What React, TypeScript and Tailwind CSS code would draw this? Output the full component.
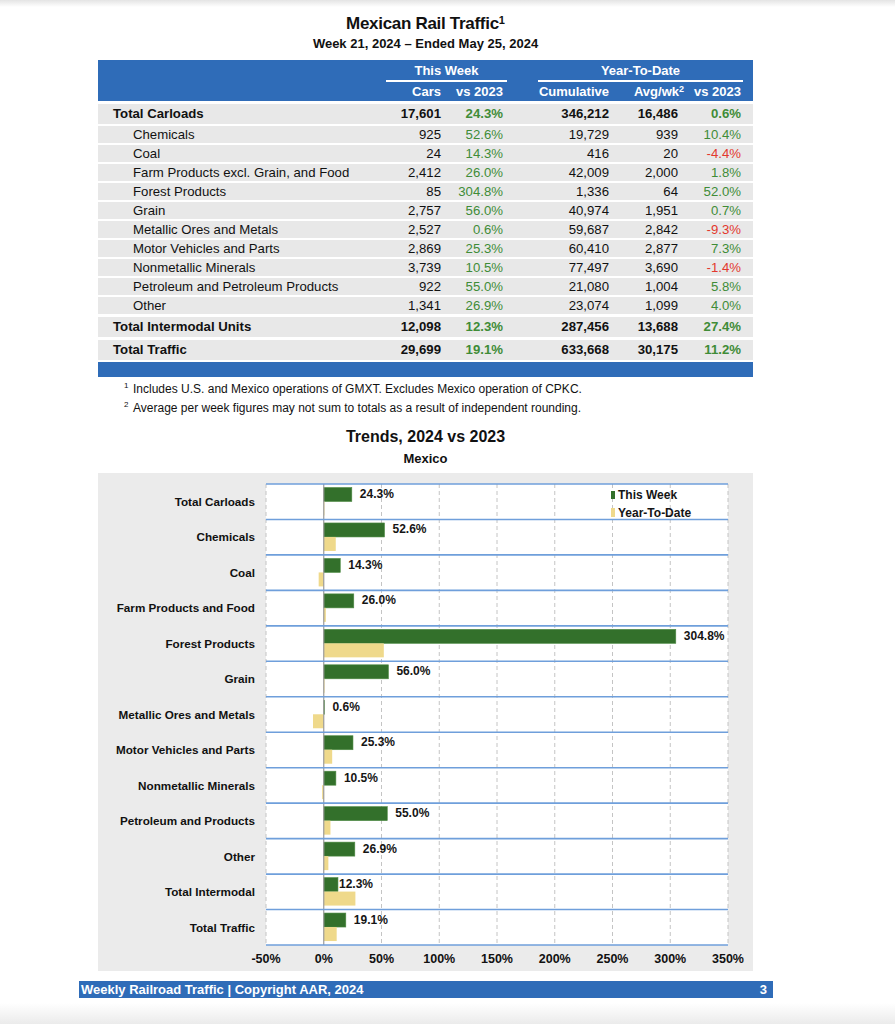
import React from "react";

type Row = { name: string; cars: string; wk: string; cum: string; avg: string; ytd: string; kind: "total" | "sub" };

const tableRows: Row[] = [
  { name: "Total Carloads", cars: "17,601", wk: "24.3%", cum: "346,212", avg: "16,486", ytd: "0.6%", kind: "total" },
  { name: "Chemicals", cars: "925", wk: "52.6%", cum: "19,729", avg: "939", ytd: "10.4%", kind: "sub" },
  { name: "Coal", cars: "24", wk: "14.3%", cum: "416", avg: "20", ytd: "-4.4%", kind: "sub" },
  { name: "Farm Products excl. Grain, and Food", cars: "2,412", wk: "26.0%", cum: "42,009", avg: "2,000", ytd: "1.8%", kind: "sub" },
  { name: "Forest Products", cars: "85", wk: "304.8%", cum: "1,336", avg: "64", ytd: "52.0%", kind: "sub" },
  { name: "Grain", cars: "2,757", wk: "56.0%", cum: "40,974", avg: "1,951", ytd: "0.7%", kind: "sub" },
  { name: "Metallic Ores and Metals", cars: "2,527", wk: "0.6%", cum: "59,687", avg: "2,842", ytd: "-9.3%", kind: "sub" },
  { name: "Motor Vehicles and Parts", cars: "2,869", wk: "25.3%", cum: "60,410", avg: "2,877", ytd: "7.3%", kind: "sub" },
  { name: "Nonmetallic Minerals", cars: "3,739", wk: "10.5%", cum: "77,497", avg: "3,690", ytd: "-1.4%", kind: "sub" },
  { name: "Petroleum and Petroleum Products", cars: "922", wk: "55.0%", cum: "21,080", avg: "1,004", ytd: "5.8%", kind: "sub" },
  { name: "Other", cars: "1,341", wk: "26.9%", cum: "23,074", avg: "1,099", ytd: "4.0%", kind: "sub" },
];

const totalRows: Row[] = [
  { name: "Total Intermodal Units", cars: "12,098", wk: "12.3%", cum: "287,456", avg: "13,688", ytd: "27.4%", kind: "total" },
  { name: "Total Traffic", cars: "29,699", wk: "19.1%", cum: "633,668", avg: "30,175", ytd: "11.2%", kind: "total" },
];

// chart: this week vs ytd, % change
const trends: { name: string; tw: number; ytd: number; gap?: number }[] = [
  { name: "Total Carloads", tw: 24.3, ytd: 0.6 },
  { name: "Chemicals", tw: 52.6, ytd: 10.4 },
  { name: "Coal", tw: 14.3, ytd: -4.4 },
  { name: "Farm Products and Food", tw: 26.0, ytd: 1.8 },
  { name: "Forest Products", tw: 304.8, ytd: 52.0 },
  { name: "Grain", tw: 56.0, ytd: 0.7 },
  { name: "Metallic Ores and Metals", tw: 0.6, ytd: -9.3 },
  { name: "Motor Vehicles and Parts", tw: 25.3, ytd: 7.3 },
  { name: "Nonmetallic Minerals", tw: 10.5, ytd: -1.4 },
  { name: "Petroleum and Products", tw: 55.0, ytd: 5.8 },
  { name: "Other", tw: 26.9, ytd: 4.0 },
  { name: "Total Intermodal", tw: 12.3, ytd: 27.4, gap: 1 },
  { name: "Total Traffic", tw: 19.1, ytd: 11.2 },
];

function Pct({ v }: { v: string }) {
  const neg = v.startsWith("-");
  return <div className={neg ? "text-right text-[#e3392e]" : "text-right text-[#3f8c37]"}>{v}</div>;
}

function TableRow({ r }: { r: Row }) {
  const total = r.kind === "total";
  return (
    <div
      className={
        total
          ? "grid grid-cols-[283px_60px_62px_106px_69px_63px] pr-[12px] bg-[#e8e8e8] h-[20px] leading-[20px] font-bold mt-[3px]"
          : "grid grid-cols-[283px_60px_62px_106px_69px_63px] pr-[12px] bg-[#e8e8e8] h-[17px] leading-[17px] mt-[2px]"
      }
    >
      <div className={total ? "pl-[15px] whitespace-nowrap" : "pl-[35px] whitespace-nowrap"}>{r.name}</div>
      <div className="text-right">{r.cars}</div>
      <Pct v={r.wk} />
      <div className="text-right">{r.cum}</div>
      <div className="text-right">{r.avg}</div>
      <Pct v={r.ytd} />
    </div>
  );
}

function TrendChart() {
  const W = 462;
  const H = 461;
  const rowH = H / 13;
  const step = W / 8;
  const x0 = step;
  const px = (v: number) => (v / 50) * step;
  const ticks = ["-50%", "0%", "50%", "100%", "150%", "200%", "250%", "300%", "350%"];

  return (
    <div className="bg-[#ebebeb] h-[498px] pt-[11px] pr-[25px] flex gap-[11px]">
      <div className="w-[157px] h-[461px] flex flex-col text-[11.7px] font-bold">
        {trends.map((t) => (
          <div key={t.name} className="flex-1 flex items-center justify-end whitespace-nowrap">
            {t.name}
          </div>
        ))}
      </div>
      <div className="w-[462px] flex flex-col">
        <svg width={W} height={H} className="bg-white overflow-visible block">
          {ticks.map((_, i) =>
            i === 1 ? null : (
              <line key={i} x1={i * step} y1={0} x2={i * step} y2={H} stroke="#c4c4c4" strokeWidth={1} strokeDasharray="4 3" />
            )
          )}
          {trends.map((t, i) => {
            const top = i * rowH;
            const gw = px(t.tw);
            const yw = px(t.ytd);
            return (
              <g key={t.name}>
                <rect x={x0} y={top + 3.5} width={gw} height={14} fill="#33702b" stroke="#4f8b45" strokeWidth={0.6} />
                <rect
                  x={yw < 0 ? x0 + yw : x0}
                  y={top + 17.5}
                  width={Math.abs(yw)}
                  height={14}
                  fill="#efd98b"
                />
                <text
                  x={x0 + Math.max(gw, 0) + (t.gap ?? 8)}
                  y={top + 10}
                  dominantBaseline="central"
                  fontSize={12}
                  fontWeight={700}
                  fill="#151515"
                >
                  {t.tw.toFixed(1)}%
                </text>
              </g>
            );
          })}
          <line x1={x0} y1={0} x2={x0} y2={H} stroke="#9a9a9a" strokeWidth={1.2} />
          {Array.from({ length: 14 }).map((_, i) => (
            <line key={i} x1={0} y1={i * rowH} x2={W} y2={i * rowH} stroke="#6f9fdb" strokeWidth={1.6} />
          ))}
          {/* legend */}
          <rect x={345} y={7} width={4} height={8} fill="#33702b" />
          <text x={352} y={11} dominantBaseline="central" fontSize={12} fontWeight={700} fill="#151515">
            This Week
          </text>
          <rect x={345} y={24} width={4} height={9} fill="#efd98b" />
          <text x={352} y={28.5} dominantBaseline="central" fontSize={12} fontWeight={700} fill="#151515">
            Year-To-Date
          </text>
        </svg>
        <div className="relative h-[14px] mt-[7px] text-[12.5px] font-bold leading-[14px]">
          {ticks.map((t, i) => (
            <span key={t} className="absolute -translate-x-1/2 whitespace-nowrap" style={{ left: i * step }}>
              {t}
            </span>
          ))}
        </div>
      </div>
    </div>
  );
}

export default function App() {
  return (
    <div className="w-[895px] h-[1024px] overflow-hidden bg-[linear-gradient(to_bottom,#e4e4e4_0px,#ffffff_7px,#ffffff_1003px,#ebebeb_1024px)] font-['Liberation_Sans',Arial,sans-serif] text-[#111]">
      <div className="ml-[79px] w-[694px] pt-[13px]">
        {/* TITLE */}
        <div className="ml-[19px] w-[655px] text-center">
          <div className="h-[22px] leading-[22px] text-[17px] font-bold tracking-[-0.3px]">
            Mexican Rail Traffic<sup className="text-[11px] tracking-normal">1</sup>
          </div>
          <div className="mt-[1px] h-[16px] leading-[16px] text-[13px] font-bold">
            Week 21, 2024 – Ended May 25, 2024
          </div>
        </div>

        {/* TABLE */}
        <div className="ml-[19px] w-[655px] mt-[8px] text-[13.2px]">
          <div className="bg-[#2f6cb8] h-[41px] pt-[3px] text-white font-bold text-[13px]">
            <div className="flex leading-[16px]">
              <div className="w-[288px]" />
              <div className="w-[121px] text-center pb-[1px] border-b-2 border-white">This Week</div>
              <div className="w-[31px]" />
              <div className="w-[205px] text-center pb-[1px] border-b-2 border-white">Year-To-Date</div>
            </div>
            <div className="grid grid-cols-[283px_60px_62px_106px_69px_63px] pr-[12px] mt-[2px] leading-[16px]">
              <div />
              <div className="text-right">Cars</div>
              <div className="text-right">vs 2023</div>
              <div className="text-right">Cumulative</div>
              <div className="text-right -mr-[6px] whitespace-nowrap">
                Avg/wk<sup className="text-[9px]">2</sup>
              </div>
              <div className="text-right">vs 2023</div>
            </div>
          </div>
          {tableRows.map((r) => (
            <TableRow key={r.name} r={r} />
          ))}
          {totalRows.map((r) => (
            <TableRow key={r.name} r={r} />
          ))}
          <div className="bg-[#2f6cb8] h-[15px] mt-[2px]" />
        </div>

        {/* FOOTNOTES */}
        <div className="mt-[3px] pl-[45px] text-[12px] leading-[19px]">
          <div className="flex">
            <span className="w-[9px] text-[8px] leading-[12px]">1</span>
            <span>Includes U.S. and Mexico operations of GMXT. Excludes Mexico operation of CPKC.</span>
          </div>
          <div className="flex">
            <span className="w-[9px] text-[8px] leading-[12px]">2</span>
            <span>Average per week figures may not sum to totals as a result of independent rounding.</span>
          </div>
        </div>

        {/* CHART */}
        <div className="ml-[19px] w-[655px]">
          <div className="mt-[9px] h-[20px] leading-[20px] text-center text-[16px] font-bold">Trends, 2024 vs 2023</div>
          <div className="mt-[4px] h-[16px] leading-[16px] text-center text-[13px] font-bold">Mexico</div>
          <div className="mt-[6px]">
            <TrendChart />
          </div>
        </div>

        {/* FOOTER */}
        <div className="mt-[10px] h-[17px] bg-[#2f6cb8] text-white text-[13px] font-bold leading-[17px] flex justify-between pl-[2px] pr-[6px]">
          <span>Weekly Railroad Traffic | Copyright AAR, 2024</span>
          <span>3</span>
        </div>
      </div>
    </div>
  );
}
